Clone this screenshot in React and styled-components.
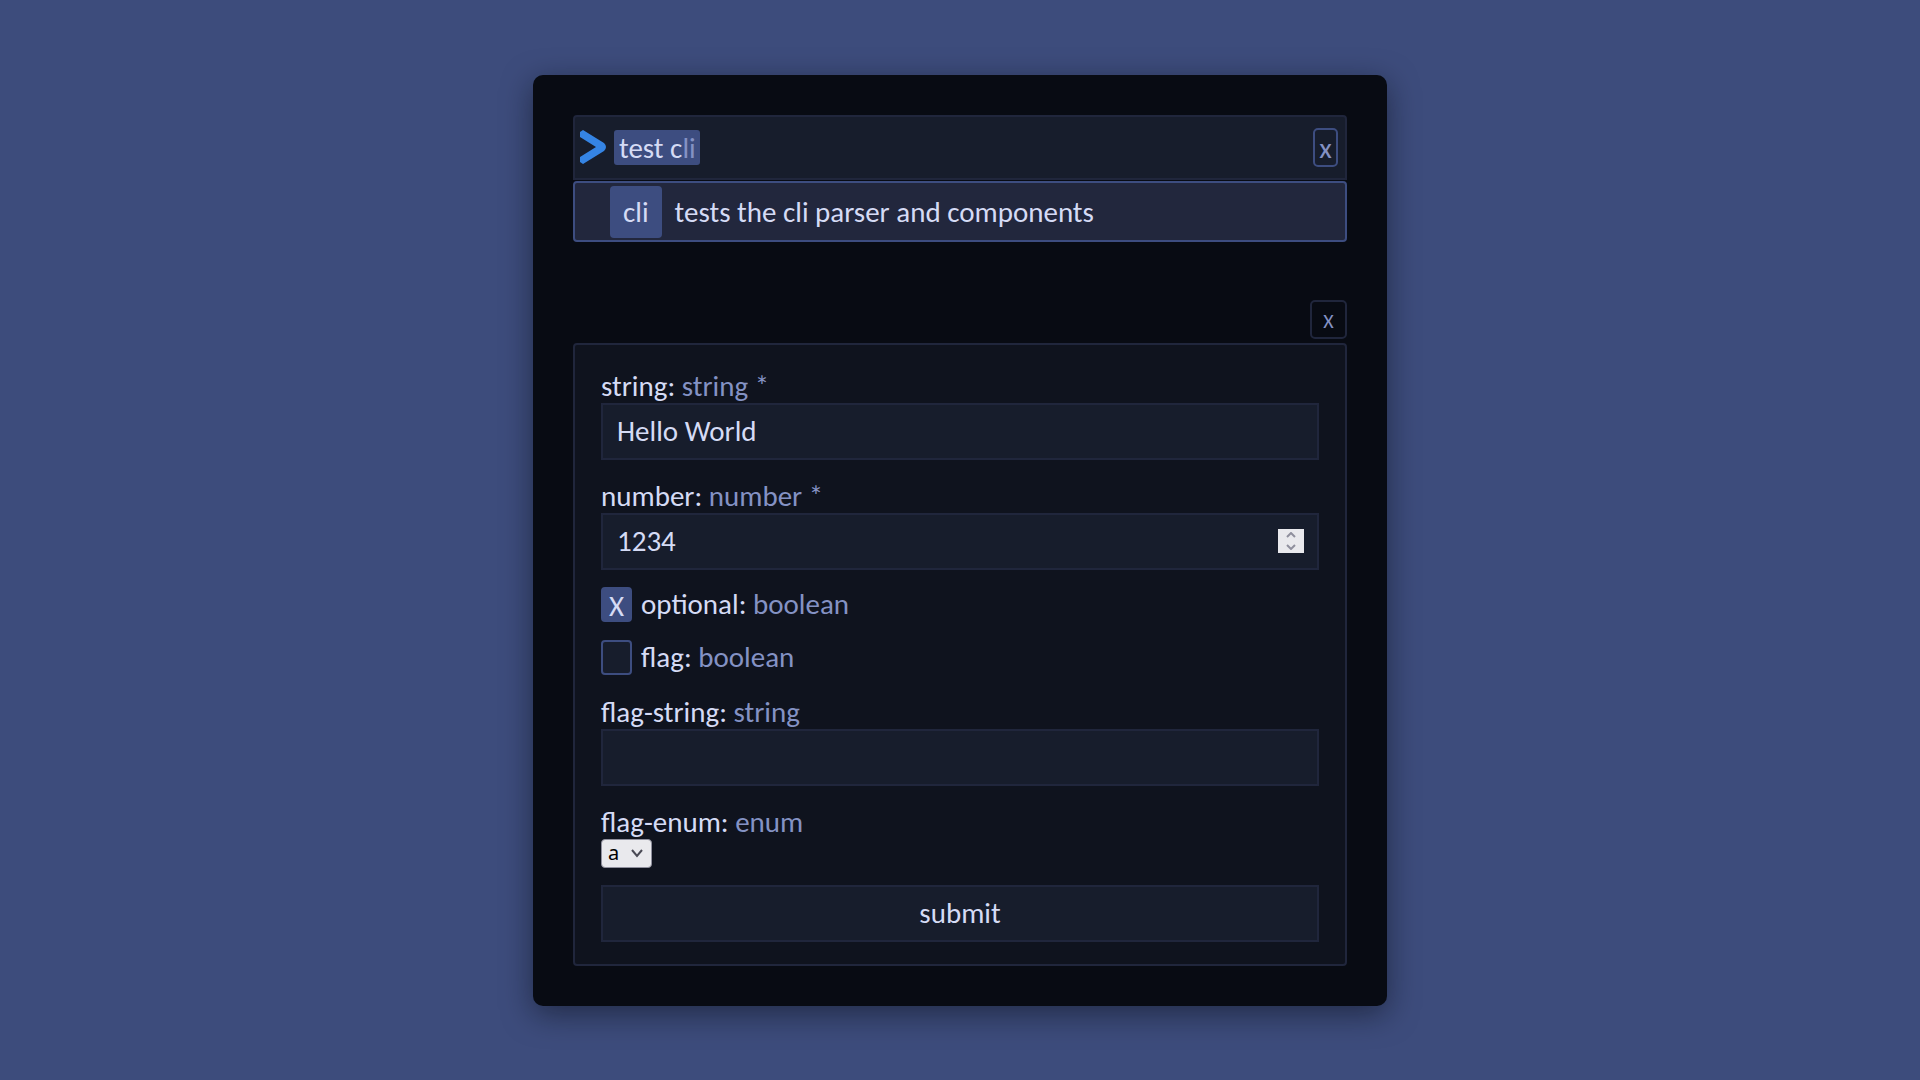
import React, { useState } from "react";
import styled, { createGlobalStyle } from "styled-components";

const color = {
  page: "#3d4c7c",
  card: "#080b13",
  panel: "#0f131e",
  field: "#171d2c",
  raised: "#22273d",
  line: "#20263c",
  accent: "#3d4d80",
  text: "#d5dbf5",
  muted: "#8492c4",
};

const GlobalStyle = createGlobalStyle`
  *, *::before, *::after { box-sizing: border-box; }
  body {
    margin: 0;
    background: ${color.page};
    color: ${color.text};
    font: 29px/34px Carlito, Calibri, Lato, sans-serif;
  }
  input, button { font: inherit; color: inherit; margin: 0; }
`;

const Page = styled.div`
  min-height: 100vh;
  display: flex;
  align-items: center;
  justify-content: center;
`;

const Card = styled.main`
  width: 100%;
  max-width: 854px;
  padding: 40px;
  background: ${color.card};
  border-radius: 10px;
  box-shadow: 0 8px 30px rgba(8, 11, 19, 0.5);
`;

const CommandBar = styled.div`
  display: flex;
  align-items: center;
  height: 65px;
  padding: 0 7px 0 4px;
  background: ${color.field};
  border: 2px solid ${color.line};
  border-radius: 4px 4px 0 0;
`;

const Prompt = styled.svg`
  width: 28px;
  height: 36px;
  margin-right: 7px;
  flex: none;
`;

const CommandChip = styled.label`
  display: flex;
  height: 35px;
  padding: 1px 4px 0 5px;
  background: ${color.accent};
  border-radius: 3px;
  white-space: pre;
`;

const CommandInput = styled.input`
  field-sizing: content;
  height: 34px;
  padding: 0;
  border: 0;
  outline: 0;
  background: none;
`;

const Ghost = styled.span`
  color: ${color.muted};
`;

const CloseButton = styled.button`
  display: flex;
  align-items: center;
  justify-content: center;
  width: ${(p) => (p.$wide ? 37 : 25)}px;
  height: 39px;
  margin-left: auto;
  padding: ${(p) => (p.$wide ? 3 : 2)}px 0 0;
  background: transparent;
  border: 2px solid ${(p) => (p.$wide ? color.line : color.accent)};
  border-radius: 5px;
  color: ${color.muted};
  font-size: ${(p) => (p.$wide ? 20 : 29)}px;
`;

const Suggestion = styled.div`
  display: flex;
  align-items: center;
  gap: 13px;
  height: 61px;
  margin: 1px 0 58px;
  padding: 1px 0 0 35px;
  background: ${color.raised};
  border: 2px solid ${color.accent};
  border-radius: 4px;
`;

const SuggestionName = styled.span`
  padding: 9px 13px;
  background: ${color.accent};
  border-radius: 4px;
`;

const Form = styled.form`
  display: flex;
  flex-direction: column;
  gap: 17px;
  margin-top: 4px;
  padding: 22px 26px;
  background: ${color.panel};
  border: 2px solid ${color.line};
  border-radius: 4px;
`;

const Field = styled.div`
  padding-top: 2px;
`;

const Label = styled.label`
  display: block;
`;

const Type = styled.span`
  color: ${color.muted};
`;

const Box = styled.div`
  display: flex;
  align-items: center;
  height: 57px;
  padding-right: 13px;
  background: ${color.field};
  border: 2px solid ${color.line};
`;

const TextInput = styled.input`
  flex: 1;
  min-width: 0;
  height: 53px;
  padding: 0 14px;
  border: 0;
  outline: 0;
  background: none;
  appearance: textfield;
  &::-webkit-inner-spin-button { appearance: none; margin: 0; }
`;

const Stepper = styled.div`
  display: flex;
  flex-direction: column;
  width: 26px;
  height: 24px;
  background: #e9e9ed;
`;

const Step = styled.button`
  display: flex;
  flex: 1;
  align-items: center;
  justify-content: center;
  padding: 0;
  border: 0;
  background: none;
  line-height: 0;
`;

const BooleanRow = styled.div`
  display: flex;
  align-items: flex-start;
  gap: 9px;
  height: 36px;
`;

const Checkbox = styled.input`
  appearance: none;
  display: flex;
  justify-content: center;
  width: 31px;
  height: 35px;
  background: ${color.field};
  border: 2px solid ${color.accent};
  border-radius: 4px;
  &:checked { background: ${color.accent}; }
  &:checked::before { content: "X"; }
`;

const SelectWrap = styled.div`
  position: relative;
  width: 51px;
  height: 29px;
`;

const Select = styled.select`
  appearance: none;
  display: block;
  width: 100%;
  height: 100%;
  padding: 0 6px;
  background: #e9e9ed;
  border: 1px solid #8f8f9d;
  border-radius: 4px;
  color: #000;
  font: 20px/26px "Noto Sans", sans-serif;
`;

const SelectArrow = styled.svg`
  position: absolute;
  right: 9px;
  top: 10px;
  pointer-events: none;
`;

const Submit = styled.button`
  height: 57px;
  padding: 0;
  background: ${color.field};
  border: 2px solid ${color.line};
`;

function Caption({ id, name, type }) {
  return (
    <Label htmlFor={id}>
      {name}: <Type>{type}</Type>
    </Label>
  );
}

function BooleanField({ name, defaultChecked }) {
  return (
    <BooleanRow>
      <Checkbox id={name} type="checkbox" defaultChecked={defaultChecked} />
      <Caption id={name} name={name} type="boolean" />
    </BooleanRow>
  );
}

export default function App() {
  const [command, setCommand] = useState("test c");
  const [number, setNumber] = useState(1234);

  return (
    <Page>
      <GlobalStyle />
      <Card>
        <CommandBar>
          <Prompt viewBox="0 0 28 36" aria-hidden="true">
            <path
              d="M4 1L1 3V8L17 18L1 28V33L4 35L25 22Q27 20 27 18Q27 16 25 14Z"
              fill="#3584e4"
            />
          </Prompt>
          <CommandChip>
            <CommandInput
              aria-label="Command"
              value={command}
              onChange={(e) => setCommand(e.target.value)}
            />
            <Ghost>li</Ghost>
          </CommandChip>
          <CloseButton type="button" onClick={() => setCommand("")}>x</CloseButton>
        </CommandBar>
        <Suggestion>
          <SuggestionName>cli</SuggestionName>
          <span>tests the cli parser and components</span>
        </Suggestion>
        <CloseButton type="button" $wide>X</CloseButton>
        <Form onSubmit={(e) => e.preventDefault()}>
          <Field>
            <Caption id="string" name="string" type="string *" />
            <Box>
              <TextInput id="string" defaultValue="Hello World" />
            </Box>
          </Field>
          <Field>
            <Caption id="number" name="number" type="number *" />
            <Box>
              <TextInput
                id="number"
                type="number"
                value={number}
                onChange={(e) => setNumber(e.target.value)}
              />
              <Stepper>
                <Step type="button" aria-label="Increase" onClick={() => setNumber(Number(number) + 1)}>
                  <svg width="10" height="6" viewBox="0 0 10 6" fill="none" stroke="#8f8f9d" strokeWidth="2">
                    <path d="M1 5L5 1L9 5" />
                  </svg>
                </Step>
                <Step type="button" aria-label="Decrease" onClick={() => setNumber(Number(number) - 1)}>
                  <svg width="10" height="6" viewBox="0 0 10 6" fill="none" stroke="#8f8f9d" strokeWidth="2">
                    <path d="M1 1L5 5L9 1" />
                  </svg>
                </Step>
              </Stepper>
            </Box>
          </Field>
          <BooleanField name="optional" defaultChecked />
          <BooleanField name="flag" />
          <Field>
            <Caption id="flag-string" name="flag-string" type="string" />
            <Box>
              <TextInput id="flag-string" />
            </Box>
          </Field>
          <Field>
            <Caption id="flag-enum" name="flag-enum" type="enum" />
            <SelectWrap>
              <Select id="flag-enum" defaultValue="a">
                <option>a</option>
              </Select>
              <SelectArrow width="12" height="9" viewBox="0 0 12 9" fill="none" stroke="#4a4a55" strokeWidth="2">
                <path d="M1 1L6 7L11 1" />
              </SelectArrow>
            </SelectWrap>
          </Field>
          <Submit type="submit">submit</Submit>
        </Form>
      </Card>
    </Page>
  );
}
